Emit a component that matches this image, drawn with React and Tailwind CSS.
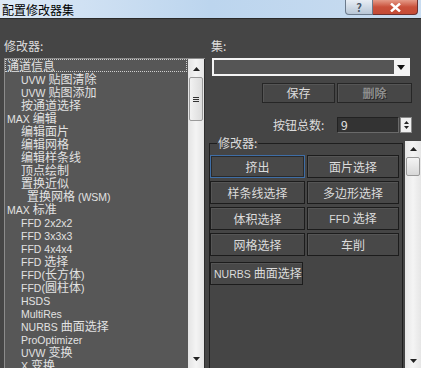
import React from 'react';

const font = { fontFamily: '"Noto Sans CJK SC", "Liberation Sans", sans-serif' };

// Latin runs use a narrower face, the CJK parts keep the 12px CJK face
const Mixed = ({ text }) => (
  <span>
    {text.split(/([\x20-\x7e]+)/).map((part, i) =>
      /[\x21-\x7e]/.test(part) ? (
        <span key={i} className="text-[10.5px]" style={{ fontFamily: '"Liberation Sans", sans-serif' }}>
          {part}
        </span>
      ) : (
        part
      )
    )}
  </span>
);

const items = [
  { t: '通道信息', l: 0, focus: true },
  { t: 'UVW 贴图清除', l: 1 },
  { t: 'UVW 贴图添加', l: 1 },
  { t: '按通道选择', l: 1 },
  { t: 'MAX 编辑', l: 0 },
  { t: '编辑面片', l: 1 },
  { t: '编辑网格', l: 1 },
  { t: '编辑样条线', l: 1 },
  { t: '顶点绘制', l: 1 },
  { t: '置换近似', l: 1 },
  { t: '置换网格 (WSM)', l: 2 },
  { t: 'MAX 标准', l: 0 },
  { t: 'FFD 2x2x2', l: 1 },
  { t: 'FFD 3x3x3', l: 1 },
  { t: 'FFD 4x4x4', l: 1 },
  { t: 'FFD 选择', l: 1 },
  { t: 'FFD(长方体)', l: 1 },
  { t: 'FFD(圆柱体)', l: 1 },
  { t: 'HSDS', l: 1 },
  { t: 'MultiRes', l: 1 },
  { t: 'NURBS 曲面选择', l: 1 },
  { t: 'ProOptimizer', l: 1 },
  { t: 'UVW 变换', l: 1 },
  { t: 'X 变换', l: 1 },
];

const indent = ['pl-[2px]', 'pl-[16px]', 'pl-[22px]'];

const setButtons = ['挤出', '面片选择', '样条线选择', '多边形选择', '体积选择', 'FFD 选择', '网格选择', '车削'];

const UpArrow = () => (
  <svg width="7" height="4" viewBox="0 0 7 4"><path d="M0 4 L3.5 0 L7 4 Z" fill="#222" /></svg>
);
const DownArrow = () => (
  <svg width="7" height="4" viewBox="0 0 7 4"><path d="M0 0 L3.5 4 L7 0 Z" fill="#222" /></svg>
);

const ModButton = ({ children, focus, className = '' }) => (
  <div
    className={`flex items-center h-[23px] bg-[#484848] text-[12px] text-[#dcdcdc] whitespace-nowrap border ${
      focus ? 'border-[#3f6ea6] shadow-[inset_0_0_0_1px_#2a2a2a]' : 'border-[#1c1c1c] shadow-[inset_1px_1px_0_#555]'
    } ${className}`}
  >
    {children}
  </div>
);

export default function App() {
  return (
    <div className="w-[421px] h-[368px] overflow-hidden flex flex-col bg-[#454545] select-none" style={font}>
      {/* Title bar */}
      <div className="h-[22px] flex justify-between bg-gradient-to-r from-[#dde9f6] via-[#bcd5ee] to-[#c9dcf0] border-b border-[#2a2a2a]">
        <div className="pl-[2px] pt-[2px] text-[12px] leading-[16px] text-black">配置修改器集</div>
        <div className="flex mr-[3px] h-[15px]">
          <div className="w-[28px] flex items-center justify-center rounded-bl-[4px] border border-t-0 border-[#6b7a8c] bg-gradient-to-b from-[#e8eef5] to-[#b8c6d6] text-[11px] font-bold text-[#4a5868] leading-none">
            ?
          </div>
          <div className="w-[45px] flex items-center justify-center rounded-br-[4px] border border-t-0 border-l-0 border-[#6b3030] bg-gradient-to-b from-[#e49a88] via-[#c9503b] to-[#c44b36]">
            <svg width="11" height="9" viewBox="0 0 11 9">
              <path d="M1 0.5 L10 8.5 M10 0.5 L1 8.5" stroke="#fff" strokeWidth="2.4" />
            </svg>
          </div>
        </div>
      </div>

      <div className="flex-1 flex">
        {/* Left column */}
        <div className="ml-[4px] w-[201px] flex flex-col pt-[20px]">
          <div className="h-[14px] leading-[14px] text-[12px] text-[#dcdcdc]">修改器:</div>
          <div className="mt-[5px] flex-1 flex border-l border-t border-[#8c8c8c] bg-[#575757]">
            <div className="flex-1 flex flex-col pr-[1px]">
              {items.map((it, i) => (
                <div
                  key={i}
                  className={`h-[13px] leading-[13px] text-[12px] text-[#e2e2e2] whitespace-nowrap ${indent[it.l]} ${
                    it.focus ? 'outline outline-1 outline-dotted outline-[#cfcfcf] -outline-offset-1' : ''
                  }`}
                >
                  <Mixed text={it.t} />
                </div>
              ))}
            </div>
            <div className="w-[17px] flex flex-col items-center bg-gradient-to-r from-[#e4e4e4] via-[#f4f4f4] to-[#e4e4e4] border-r border-[#2e2e2e]">
              <div className="h-[18px] flex items-center justify-center pt-[2px]">
                <UpArrow />
              </div>
              <div className="w-[14px] h-[44px] rounded-[2px] border border-[#9a9a9a] bg-gradient-to-r from-[#f2f2f2] to-[#dcdcdc] flex flex-col items-center justify-center gap-[1px]">
                <div className="w-[6px] h-[1px] bg-[#333]" />
                <div className="w-[6px] h-[1px] bg-[#333]" />
                <div className="w-[6px] h-[1px] bg-[#333]" />
              </div>
              <div className="flex-1" />
              <div className="h-[14px] flex items-start justify-center">
                <DownArrow />
              </div>
            </div>
          </div>
        </div>

        {/* Right column */}
        <div className="ml-[3px] w-[213px] flex flex-col pt-[20px]">
          <div className="ml-[3px] h-[14px] leading-[14px] text-[12px] text-[#dcdcdc]">集:</div>
          <div className="mt-[5px] ml-[4px] w-[198px] h-[18px] flex border-2 border-[#f4f4f4] bg-[#555]">
            <div className="flex-1" />
            <div className="w-[14px] bg-[#f4f4f4] flex items-center justify-center">
              <svg width="8" height="5" viewBox="0 0 8 5"><path d="M0 0 L4 5 L8 0 Z" fill="#111" /></svg>
            </div>
          </div>

          <div className="mt-[7px] flex gap-[2px] pl-[54px]">
            <div className="w-[73px] h-[20px] flex items-center justify-center border border-[#262626] shadow-[inset_1px_1px_0_#555] bg-[#474747] text-[12px] text-[#dcdcdc]">
              保存
            </div>
            <div className="w-[75px] h-[20px] flex items-center justify-center border border-[#262626] shadow-[inset_1px_1px_0_#555] bg-[#474747] text-[12px] font-bold text-[#8e8e8e] [text-shadow:1px_1px_0_#2a2a2a]">
              删除
            </div>
          </div>

          <div className="mt-[14px] h-[16px] flex items-center">
            <div className="ml-[65px] w-[64px] text-[12px] leading-[16px] text-[#dcdcdc]">按钮总数:</div>
            <div className="w-[62px] h-[16px] border border-[#222] border-b-[#6a6a6a] border-r-[#6a6a6a] bg-[#333] text-[12px] leading-[14px] text-[#e6e6e6] pl-[3px]">
              9
            </div>
            <div className="ml-[1px] w-[12px] h-[16px] bg-[#f0f0f0] border border-[#888] flex flex-col items-center justify-center gap-[2px]">
              <svg width="5" height="3" viewBox="0 0 5 3"><path d="M0 3 L2.5 0 L5 3 Z" fill="#222" /></svg>
              <svg width="5" height="3" viewBox="0 0 5 3"><path d="M0 0 L2.5 3 L5 0 Z" fill="#222" /></svg>
            </div>
          </div>

          <div className="mt-[8px] flex-1 flex">
            <div className="relative mt-[2px] ml-[1px] w-[194px] border border-[#1e1e1e] border-b-0 pt-[11px]">
              <div className="absolute -top-[8px] left-[7px] px-[1px] bg-[#454545] text-[12px] leading-[14px] text-[#dcdcdc]">
                修改器:
              </div>
              <div className="grid grid-cols-[95px_92px] gap-x-[2px] gap-y-[3px]">
                {setButtons.map((b, i) => (
                  <ModButton key={b} focus={i === 0} className="justify-center">
                    <Mixed text={b} />
                  </ModButton>
                ))}
                <ModButton className="mt-[3px] w-[93px] pl-[3px] h-[21px]">
                  <Mixed text="NURBS 曲面选择" />
                </ModButton>
              </div>
            </div>
            <div className="ml-[2px] w-[16px] flex flex-col items-center bg-gradient-to-r from-[#e6e6e6] via-[#f4f4f4] to-[#e6e6e6]">
              <div className="h-[16px] flex items-center justify-center">
                <UpArrow />
              </div>
              <div className="w-[14px] h-[19px] border border-[#9a9a9a] rounded-[2px] bg-gradient-to-b from-[#f4f4f4] to-[#d8d8d8]" />
              <div className="flex-1" />
              <div className="h-[12px] flex items-start justify-center">
                <DownArrow />
              </div>
            </div>
          </div>
        </div>
      </div>
    </div>
  );
}
